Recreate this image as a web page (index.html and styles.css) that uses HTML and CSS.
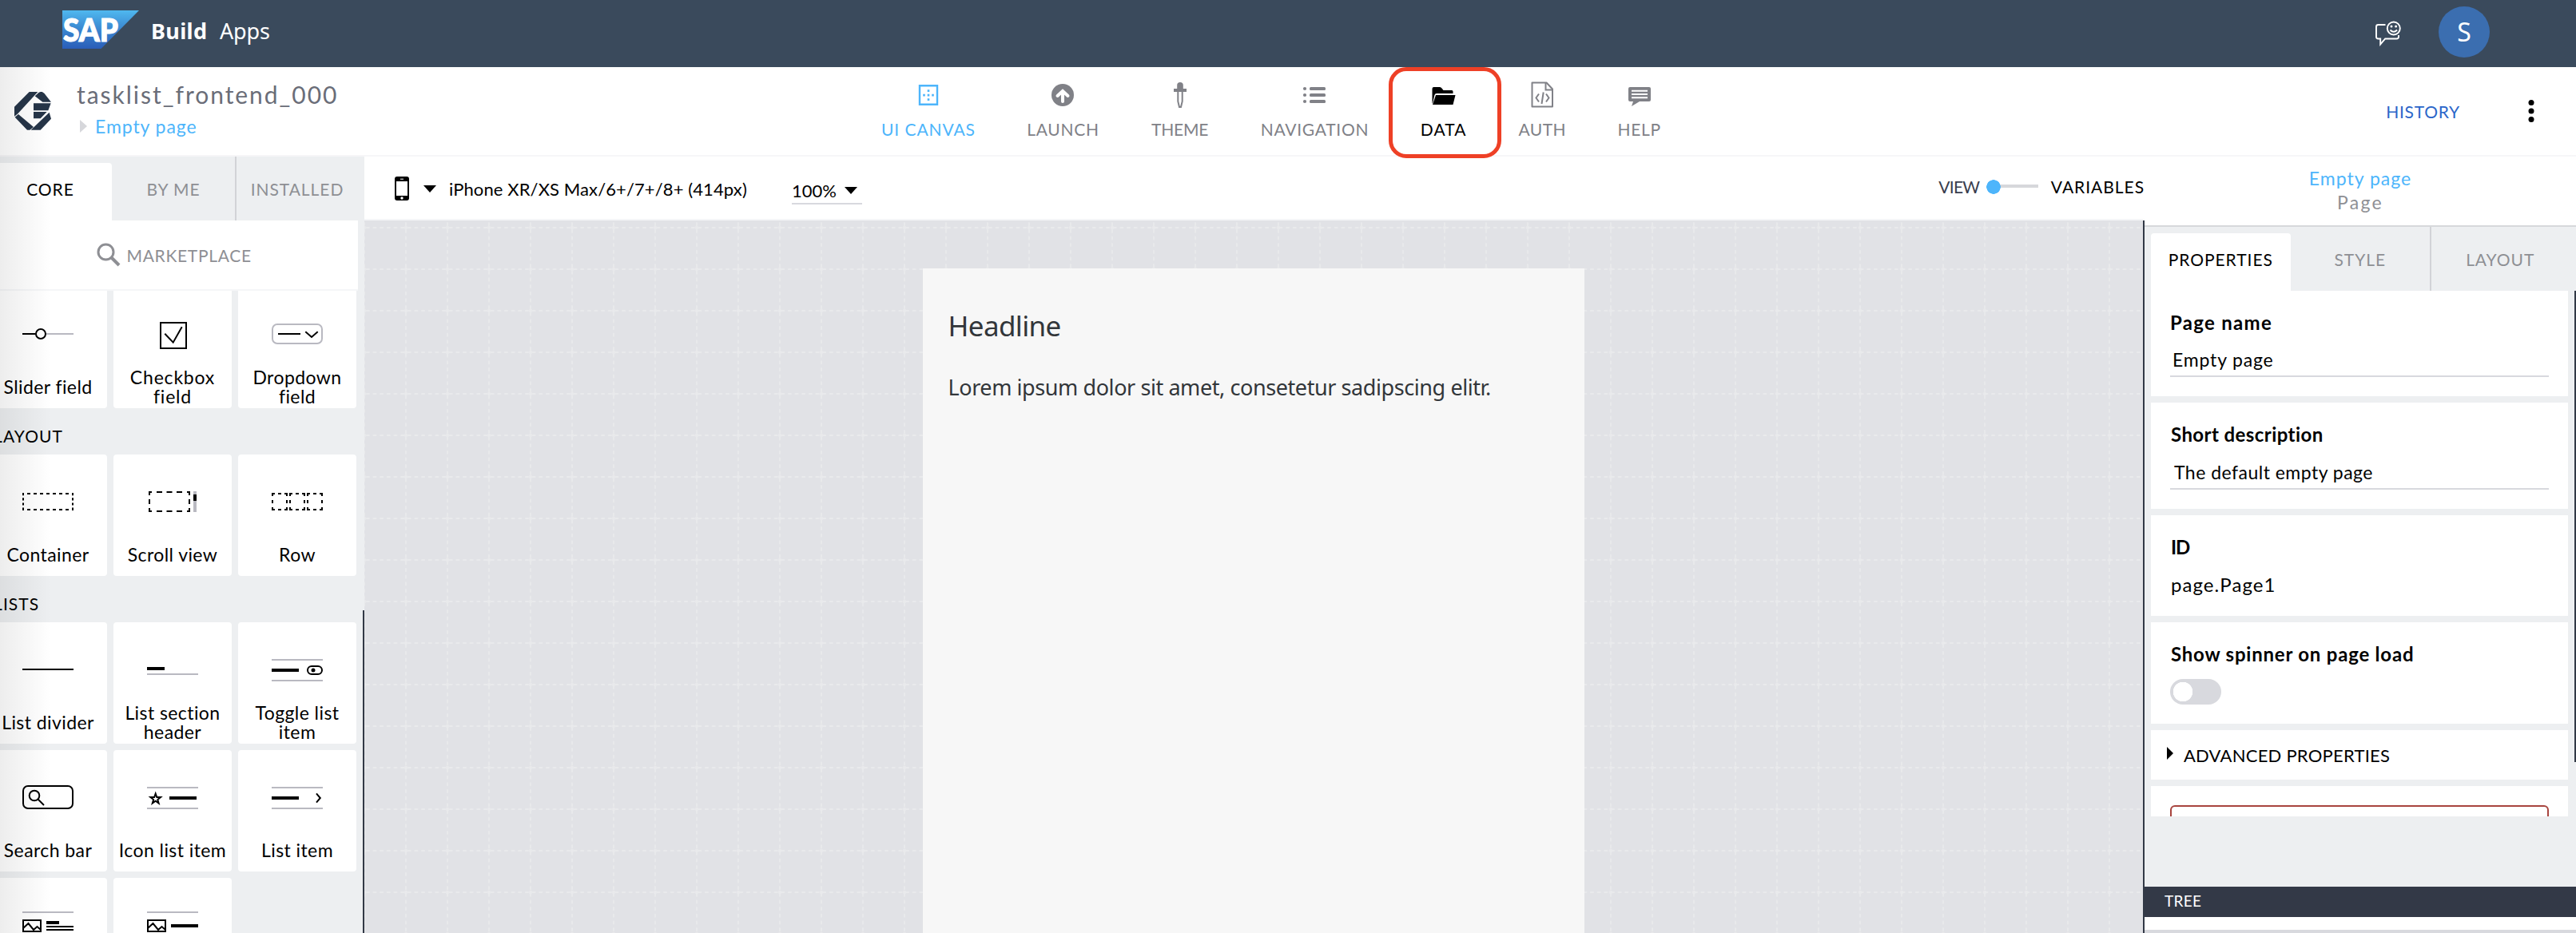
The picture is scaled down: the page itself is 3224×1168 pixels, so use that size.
FILE: index.html
```html
<!DOCTYPE html>
<html lang="en">
<head>
<meta charset="utf-8">
<title>SAP Build Apps</title>
<link rel="stylesheet" href="styles.css">
</head>
<body>
<div class="app">
  <header class="shell">
    <svg class="sap-logo" viewBox="0 0 96 48">
      <defs><linearGradient id="sap" x1="0" y1="0" x2="0" y2="1"><stop offset="0" stop-color="#4fb8ef"/><stop offset=".5" stop-color="#3a86d0"/><stop offset="1" stop-color="#2a5db8"/></linearGradient></defs>
      <path d="M0 0H96L48.500 48H0Z" fill="url(#sap)"/>
      <text class="sap-text" x="1" y="38.500" textLength="69" lengthAdjust="spacingAndGlyphs">SAP</text>
    </svg>
    <span class="product">Build</span>
    <span class="product-sub">Apps</span>
    <svg class="feedback" viewBox="0 0 34 32">
      <g fill="none" stroke="#fff" stroke-width="1.9">
        <path d="M13.500 5H4.500Q2 5 2 7.500V20Q2 22.500 4.500 22.500H7.200V29.500L13.200 22.500H27.500Q30 22.500 30 20V18"/>
        <circle cx="23.800" cy="9.500" r="8"/>
        <path d="M19.500 11.500Q23.800 16 28.100 11.500"/>
      </g>
      <circle cx="21" cy="7" r="1.500" fill="#fff"/><circle cx="26.600" cy="7" r="1.500" fill="#fff"/>
    </svg>
    <span class="avatar">S</span>
  </header>

  <div class="topbar">
    <div class="project">
      <svg class="composer" viewBox="0 0 138 144" fill="#263548">
        <path d="M56 0H88L13 82 0 92V56ZM92 2 98 0H104L112 5 138 38H106L77 16ZM72 43H137L127 70H72ZM72 75H122L98 100H72ZM131 77 138 101 98 143H62ZM2 95 15 84 72 132 58 143H48Z"/>
      </svg>
      <div class="titles">
        <div class="title">tasklist_frontend_000</div>
        <div class="crumb"><i class="crumb-arrow"></i><span>Empty page</span></div>
      </div>
    </div>
    <nav class="nav">
      <a class="nav-item is-active">
        <svg viewBox="0 0 32 34"><path d="M5 5.200H27V28.800H5Z" fill="none" stroke="#4db5fb" stroke-width="2.400"/><path d="M9.200 15.800h2.600v2.600H9.200zM14.700 15.800h2.600v2.600h-2.600zM20.200 15.800h2.600v2.600h-2.600zM14.700 10.300h2.600v2.600h-2.600zM14.700 21.300h2.600v2.600h-2.600z" fill="#4db5fb"/></svg>
        <span>UI CANVAS</span>
      </a>
      <a class="nav-item">
        <svg viewBox="0 0 32 34"><circle cx="16" cy="17" r="14" fill="#808187"/><path d="M16 25V12.500M9.500 18 16 12 22.500 18" fill="none" stroke="#fff" stroke-width="4" stroke-linecap="round"/></svg>
        <span>LAUNCH</span>
      </a>
      <a class="nav-item is-theme">
        <svg viewBox="0 0 32 34"><path d="M12.200 9V4.500Q12.200 1 16 1Q19.800 1 19.800 4.500V9H24V13H8V9Z" fill="#808187"/><path d="M13.300 12V25L15 32H17L18.700 25V12" fill="none" stroke="#808187" stroke-width="2"/></svg>
        <span>THEME</span>
      </a>
      <a class="nav-item">
        <svg viewBox="0 0 32 34"><g fill="#808187"><circle cx="4" cy="9" r="2.100"/><circle cx="4" cy="17" r="2.100"/><circle cx="4" cy="25" r="2.100"/><rect x="10" y="7" width="20" height="4" rx="1.500"/><rect x="10" y="15" width="20" height="4" rx="1.500"/><rect x="10" y="23" width="20" height="4" rx="1.500"/></g></svg>
        <span>NAVIGATION</span>
      </a>
      <a class="nav-item is-data">
        <svg viewBox="0 0 32 34"><path d="M1.500 27V9Q1.500 7 3.500 7H11Q12.500 7 13.500 8.500L15.500 11H26Q27.500 11 27.500 12.500V15H7Q5 15 4.400 17L2 27.500ZM6 17H30.500L27.500 29H2Z" fill="#000"/></svg>
        <span>DATA</span>
        <i class="highlight"></i>
      </a>
      <a class="nav-item is-auth">
        <svg viewBox="0 0 32 34"><g fill="none" stroke="#808187" stroke-width="2"><path d="M3.500 1.500H21.500L29 9.500V31.500H3.500V1.500Z" stroke-linejoin="round"/><path d="M20.500 2V10.500H29"/><path d="M12 15.500 8.500 20.500 12 25.500M21 15.500 24.500 20.500 21 25.500M17.700 13.500 15.500 28"/></g></svg>
        <span>AUTH</span>
      </a>
      <a class="nav-item">
        <svg viewBox="0 0 32 34"><path d="M4 7H28Q30 7 30 9V23Q30 25 28 25H16L6 31 8 25H4Q2 25 2 23V9Q2 7 4 7Z" fill="#808187"/><path d="M6 11.800H26M6 16H26M6 20.200H26" stroke="#fff" stroke-width="2"/></svg>
        <span>HELP</span>
      </a>
    </nav>
    <div class="top-actions">
      <span class="history">HISTORY</span>
      <svg class="kebab" viewBox="0 0 8 30"><circle cx="4" cy="4.500" r="3.500"/><circle cx="4" cy="15" r="3.500"/><circle cx="4" cy="25.500" r="3.500"/></svg>
    </div>
  </div>

  <main class="work">
    <aside class="left">
      <div class="tabs left-tabs">
        <span class="tab on">CORE</span><span class="tab">BY ME</span><span class="tab sep">INSTALLED</span>
      </div>
      <div class="market">
        <svg viewBox="0 0 30 30"><circle cx="11.500" cy="11.500" r="9.500" fill="none" stroke="#8e8f94" stroke-width="3"/><path d="M18.500 18.500 28 28" stroke="#8e8f94" stroke-width="4"/></svg>
        <span>MARKETPLACE</span>
      </div>
      <div class="library">
        <div class="cards first">
          <div class="card"><svg viewBox="0 0 64 40"><path d="M0 20H16.500" stroke="#000" stroke-width="2"/><path d="M30 20H64" stroke="#b9b9c1" stroke-width="2"/><circle cx="23" cy="20" r="6" fill="none" stroke="#000" stroke-width="2"/></svg><p><span>Slider field</span></p></div>
          <div class="card"><svg viewBox="0 0 64 40"><path d="M17 6H49V38H17Z M22.300 19.700 32.700 30.700 43.700 11.300" fill="none" stroke="#000" stroke-width="2"/></svg><p class="wider"><span>Checkbox</span><span>field</span></p></div>
          <div class="card"><svg viewBox="0 0 64 40"><rect x="1" y="8" width="62" height="24" rx="6" fill="none" stroke="#b9b9c1" stroke-width="2"/><path d="M8 20H36M42.300 17.300 50 24 57.700 17.300" fill="none" stroke="#000" stroke-width="2"/></svg><p><span>Dropdown</span><span>field</span></p></div>
        </div>
        <h3>LAYOUT</h3>
        <div class="cards">
          <div class="card"><svg viewBox="0 0 64 40"><path d="M0 10H64M0 30H64" stroke="#000" stroke-width="2" stroke-dasharray="4 4" stroke-dashoffset="2"/><path d="M1 9V31M63 9V31" stroke="#000" stroke-width="2" stroke-dasharray="3.200 3"/></svg><p><span>Container</span></p></div>
          <div class="card"><svg viewBox="0 0 64 40"><path d="M3 12V8H6M12 8h7M24.500 8h7M37 8h7M50 8h3V12M53 17v6M53 28V32H50M44 32h-7M31.500 32h-7M19 32h-7M6 32H3V28M3 23v-6" fill="none" stroke="#000" stroke-width="2"/><path d="M60 7V33" stroke="#b9b9c1" stroke-width="4"/><path d="M60 11V19" stroke="#000" stroke-width="4"/></svg><p><span>Scroll view</span></p></div>
          <div class="card"><svg viewBox="0 0 64 40"><g fill="none" stroke="#000" stroke-width="2"><path id="cell" d="M1 13V10H4M8 10h4M16 10h3V13M19 18v4M19 27v3H16M12 30H8M4 30H1V27M1 22v-4"/><use href="#cell" x="22"/><use href="#cell" x="44"/></g></svg><p><span>Row</span></p></div>
        </div>
        <h3>LISTS</h3>
        <div class="cards">
          <div class="card"><svg viewBox="0 0 64 40"><path d="M0 20H64" stroke="#000" stroke-width="2"/></svg><p><span>List divider</span></p></div>
          <div class="card"><svg viewBox="0 0 64 40"><path d="M0 19H22" stroke="#000" stroke-width="4"/><path d="M0 26H64" stroke="#b9b9c1" stroke-width="2"/></svg><p><span>List section</span><span>header</span></p></div>
          <div class="card"><svg viewBox="0 0 64 40"><path d="M0 8H64M0 34H64" stroke="#b9b9c1" stroke-width="2"/><path d="M0 21H34" stroke="#000" stroke-width="4"/><rect x="45" y="16" width="18" height="10" rx="5" fill="none" stroke="#000" stroke-width="2"/><circle cx="52" cy="21" r="2.500"/></svg><p><span>Toggle list</span><span>item</span></p></div>
          <div class="card"><svg viewBox="0 0 64 40"><rect x="1" y="6" width="62" height="28" rx="6" fill="none" stroke="#000" stroke-width="2"/><circle cx="15" cy="18" r="6.300" fill="none" stroke="#000" stroke-width="2"/><path d="M19.500 22.500 27 30" stroke="#000" stroke-width="2"/></svg><p><span>Search bar</span></p></div>
          <div class="card"><svg viewBox="0 0 64 40"><path d="M0 8H64M0 34H64" stroke="#b9b9c1" stroke-width="2"/><path d="M28 21H62" stroke="#000" stroke-width="4"/><path d="M10.700 15.500 12.300 20H17L13.300 23 14.600 27.500 10.700 24.800 6.800 27.500 8.100 23 4.400 20H9.100Z" fill="none" stroke="#000" stroke-width="2"/></svg><p><span>Icon list item</span></p></div>
          <div class="card"><svg viewBox="0 0 64 40"><path d="M0 8H64M0 34H64" stroke="#b9b9c1" stroke-width="2"/><path d="M0 21H34" stroke="#000" stroke-width="4"/><path d="M56 15.300 60.800 21 56 26.700" fill="none" stroke="#000" stroke-width="2"/></svg><p><span>List item</span></p></div>
          <div class="card"><svg viewBox="0 0 64 40"><path d="M0 4H64" stroke="#b9b9c1" stroke-width="2"/><path d="M1 14H23V28H1ZM1 24 7.500 18 14 26 18.500 22 23 26" fill="none" stroke="#000" stroke-width="2"/><path d="M30 17H46" stroke="#000" stroke-width="4"/><path d="M30 22H64M30 26H64" stroke="#000" stroke-width="2"/></svg></div>
          <div class="card"><svg viewBox="0 0 64 40"><path d="M0 4H64" stroke="#b9b9c1" stroke-width="2"/><path d="M1 14H23V28H1ZM1 24 7.500 18 14 26 18.500 22 23 26" fill="none" stroke="#000" stroke-width="2"/><path d="M30 21H64" stroke="#000" stroke-width="4"/></svg></div>
        </div>
        <i class="left-scroll"></i>
      </div>
    </aside>

    <section class="center">
      <div class="toolbar">
        <svg class="phone" viewBox="0 0 18 30"><rect width="18" height="30" rx="3"/><path d="M2 6H16V24H2Z" fill="#fff"/><path d="M7 3.200H11" stroke="#fff"/><circle cx="9" cy="27" r="1.700" fill="#fff"/></svg>
        <svg class="caret" viewBox="0 0 16 9"><path d="M0 0H16L8 9Z"/></svg>
        <span class="device">iPhone XR/XS Max/6+/7+/8+ (414px)</span>
        <div class="zoom"><span>100%</span><svg class="caret" viewBox="0 0 16 9"><path d="M0 0H16L8 9Z"/></svg></div>
        <div class="mode"><span class="view">VIEW</span><i class="slide"></i><span class="vars">VARIABLES</span></div>
      </div>
      <div class="canvas">
        <div class="page">
          <h1>Headline</h1>
          <p>Lorem ipsum dolor sit amet, consetetur sadipscing elitr.</p>
        </div>
      </div>
    </section>

    <aside class="right">
      <div class="subject"><span class="subject-name">Empty page</span><span class="subject-type">Page</span></div>
      <div class="tabs right-tabs">
        <span class="tab on">PROPERTIES</span><span class="tab">STYLE</span><span class="tab sep">LAYOUT</span>
      </div>
      <div class="props">
        <div class="prop p1"><h4>Page name</h4><div class="field">Empty page</div></div>
        <div class="prop p2"><h4>Short description</h4><div class="field">The default empty page</div></div>
        <div class="prop p3"><h4>ID</h4><div class="plain">page.Page1</div></div>
        <div class="prop p4"><h4>Show spinner on page load</h4><i class="switch"></i></div>
        <div class="prop p5"><i class="adv-arrow"></i><span>ADVANCED PROPERTIES</span></div>
        <div class="prop p6"><div class="danger"></div></div>
        <i class="right-scroll"></i>
      </div>
      <div class="tree">TREE</div>
      <div class="tree-body"></div>
    </aside>
  </main>
  <div class="edge"></div>
</div>
</body>
</html>
```
FILE: styles.css
```css
* { box-sizing: border-box; }
body { margin: 0; background: #fff; font-family: Lato, "Liberation Sans", sans-serif; font-size: 22px; color: #000; }
svg { display: block; flex: none; }
h1, h3, h4, p { margin: 0; font-weight: 400; }
i { display: block; flex: none; }

.app { position: relative; width: 3224px; height: 1168px; display: grid; grid-template-rows: 84px 112px 972px; overflow: hidden; }

/* shell bar */
.shell { background: #3a4a5c; color: #fff; display: flex; align-items: center; padding: 0 108px 0 78px; font-family: "Noto Sans", sans-serif; font-size: 27px; line-height: 40px; }
.sap-logo { width: 96px; height: 48px; margin-top: -10px; }
.sap-text { font: 900 40px Lato, sans-serif; fill: #fff; stroke: #fff; stroke-width: 1.2px; }
.product { font-weight: 700; margin: 0 0 6px 15px; letter-spacing: .34px; }
.product-sub { margin: 0 0 6px 15.5px; letter-spacing: -.15px; flex: 1; }
.feedback { width: 34px; height: 32px; margin-right: 46px; }
.avatar { width: 64px; height: 64px; border-radius: 50%; background: #3b6eb0; font-size: 32px; line-height: 64px; text-align: center; margin-top: -4px; }

/* project bar */
.topbar { background: #fff; border-bottom: 2px solid #f6f6f8; display: grid; grid-template-columns: 1103.7px auto 1fr; }
.project { display: flex; padding-left: 18px; }
.composer { width: 46px; height: 48px; margin-top: 31px; }
.titles { margin-left: 32px; padding-top: 14px; }
.title { font-size: 30px; line-height: 40px; letter-spacing: 1.97px; color: #6a6d78; }
.crumb { display: flex; align-items: center; color: #4db5fb; font-size: 23px; letter-spacing: .92px; line-height: 40px; }
.crumb-arrow { border: solid transparent; border-width: 8px 0 8px 9px; border-left-color: #d6d7db; margin: 0 10px 0 4px; }
.nav { display: grid; grid-template-columns: 116.5px 88.5px 72px 133.5px 57px 58px 53px; gap: 66px; color: #808187; letter-spacing: .73px; }
.nav-item { position: relative; display: flex; flex-direction: column; align-items: center; padding-top: 18px; line-height: 30px; font-size: 21px; white-space: nowrap; }
.nav-item svg { width: 32px; height: 34px; margin-bottom: 11px; }
.is-active { color: #4db5fb; letter-spacing: .92px; }
.is-theme { letter-spacing: -.19px; }
.is-data { color: #000; letter-spacing: 1.09px; }
.is-auth { letter-spacing: .43px; }
.highlight { position: absolute; left: 50%; top: 0; width: 141px; height: 114px; margin-left: -69px; border: 5px solid #ee4026; border-radius: 22px; }
.top-actions { display: flex; justify-content: flex-end; align-items: center; padding-right: 52px; }
.history { color: #2b66c9; margin-right: 85px; font-size: 21px; letter-spacing: .76px; }
.kebab { width: 8px; height: 30px; }

.work { display: grid; grid-template-columns: 456px 2228px 540px; min-height: 0; }

/* tabs */
.tabs { display: flex; padding-top: 8px; background: #edeff1; color: #8e8f94; font-size: 21px; letter-spacing: .95px; }
.tab { flex: none; height: 72px; line-height: 66px; text-align: center; }
.tab.on { background: #fff; color: #000; border-radius: 4px 4px 0 0; }
.tab.sep { border-left: 2px solid #d2d3d7; margin-top: -8px; padding-top: 8px; height: 80px; }

/* component library */
.left { background: #edeff1; display: flex; flex-direction: column; overflow: hidden; min-height: 0; }
.left-tabs { margin-left: -14px; }
.left-tabs .tab { width: 154px; }
.market { width: 448px; height: 88px; background: #fff; border-bottom: 2px solid #f5f6f8; color: #8e8f94; display: flex; align-items: center; padding-left: 121px; flex: none; font-size: 21px; letter-spacing: .69px; }
.market svg { width: 30px; height: 30px; margin-right: 7.5px; }
.library { position: relative; flex: 1; min-height: 0; overflow: hidden; }
.cards { display: grid; grid-template-columns: repeat(3, 148px); grid-auto-rows: 152px; gap: 8px; margin-left: -14px; }
.first { margin-top: -5px; }
.card { background: #fff; border-radius: 4px; display: flex; flex-direction: column; align-items: center; padding-top: 39px; }
.card svg { width: 64px; height: 40px; overflow: visible; }
.card p { height: 48px; margin-top: 22px; display: flex; flex-direction: column; justify-content: center; line-height: 24px; text-align: center; font-size: 23px; letter-spacing: .42px; white-space: nowrap; }
.card .wider { letter-spacing: .8px; }
.library h3 { height: 58px; line-height: 70px; margin-left: -8px; font-size: 21px; letter-spacing: 1.1px; }
.left-scroll { position: absolute; right: 0; top: 400px; width: 2px; bottom: 0; background: #323946; }

/* canvas */
.center { display: flex; flex-direction: column; min-height: 0; }
.toolbar { height: 80px; background: #fff; border-bottom: 2px solid #f5f6f8; display: flex; align-items: center; padding-left: 38px; flex: none; }
.phone { width: 18px; height: 30px; margin-top: 2px; }
.caret { width: 16px; height: 9px; }
.phone + .caret { margin: 3px 16px 0 18px; }
.device { letter-spacing: .11px; margin-top: 3px; }
.zoom { display: flex; align-items: center; margin: 2px 0 0 56px; width: 88px; height: 40px; padding-top: 6px; border-bottom: 2px solid #d8d9de; }
.zoom .caret { margin-left: 10px; }
.mode { display: flex; align-items: center; margin: -3px 0 0 auto; font-size: 21px; }
.view { color: #383d4d; letter-spacing: -.74px; }
.vars { letter-spacing: .97px; }
.slide { width: 65px; height: 18px; margin: 0 16px 0 8.5px; background: radial-gradient(circle at 9px 9px, #4db5fb 8.5px, transparent 9px), linear-gradient(#d6d7db, #d6d7db) 12px 6px / 53px 4px no-repeat; }
/* dashed 52px grid with a soft cross at every intersection */
.canvas { flex: 1; border-right: 2px solid #323946; min-height: 0; background:
    radial-gradient(circle 3px at 26px 9px, #e9eaec 40%, transparent) 26px 0 / 52px 52px,
    radial-gradient(ellipse 3px 1.3px at 4.33px 9px, #e9eaec 70%, transparent) 0 0 / 8.667px 52px,
    radial-gradient(ellipse 1.3px 3px at 26px 4.33px, #e8e9eb 70%, transparent) 26px 9px / 52px 8.667px,
    #e1e2e6; }
.page { width: 828px; height: 100%; margin: 60px auto 0; background: #f7f7f7; padding: 44px 32px; color: #32363a; font-family: "Noto Sans", sans-serif; }
.page h1 { font-size: 35px; line-height: 56px; letter-spacing: -.63px; margin-left: -.5px; }
.page p { font-size: 27px; line-height: 40px; letter-spacing: -.42px; margin: 28.5px 0 0 -.5px; white-space: nowrap; }

/* property panel */
.right { background: #edeff1; display: flex; flex-direction: column; min-height: 0; overflow: hidden; }
.subject { height: 88px; flex: none; background: #fff; border-bottom: 2px solid #d6d8db; display: flex; flex-direction: column; align-items: center; line-height: 30px; padding-top: 12px; font-size: 23px; letter-spacing: 1px; }
.subject-name { color: #4db5fb; }
.subject-type { color: #8e8f94; letter-spacing: 2.3px; }
.right-tabs { padding-left: 8px; }
.right-tabs .tab { width: 174.5px; }
.props { position: relative; display: flex; flex-direction: column; gap: 8px; padding: 0 10px 0 8px; height: 658px; overflow: hidden; flex: none; }
.prop { background: #fff; padding: 22px 24px 0 25px; flex: none; }
.prop h4 { font-size: 24px; line-height: 36px; font-weight: 700; letter-spacing: .78px; }
.p1 { height: 132px; } .p2 { height: 133px; } .p3 { height: 126px; } .p4 { height: 127px; }
.p1 h4 { letter-spacing: 1.3px; margin-left: -1px; }
.p2 h4 { letter-spacing: .42px; }
.p3 h4 { letter-spacing: -1px; }
.prop.p5 { height: 62px; display: flex; align-items: center; padding: 0 20px; letter-spacing: .23px; }
.prop.p6 { height: 80px; padding: 24px 24px 0; }
.field { border-bottom: 2px solid #d8d9de; height: 38px; line-height: 28px; padding: 2px 4px 0 3px; margin: 12px 0 0 -1px; font-size: 23px; letter-spacing: .82px; }
.p2 .field { margin-top: 13px; padding-left: 5px; letter-spacing: .48px; }
.plain { font-size: 24px; line-height: 36px; margin-top: 11px; letter-spacing: 1.06px; }
.switch { width: 64px; height: 32px; border-radius: 16px; margin: 13px 0 0 -1px; background: radial-gradient(circle at 16px 16px, #fff 12px, transparent 12.5px) #d8d9de; }
.adv-arrow { border: solid transparent; border-width: 8px 0 8px 8px; border-left-color: #000; margin: -4px 13px 0 0; }
.danger { height: 60px; border: 2px solid #a8443e; border-radius: 6px; }
.right-scroll { position: absolute; right: 0; top: 0; width: 2px; height: 590px; background: #323946; }
.tree { margin-top: 88px; height: 38px; line-height: 36px; padding-left: 25px; background: #333947; color: #fff; font-size: 19px; letter-spacing: .3px; flex: none; }
.tree-body { flex: 1; background: #fff; border-bottom: 4px solid #d8d9de; }

/* soft shade along the window's left edge */
.edge { position: absolute; left: 0; top: 84px; bottom: 0; width: 64px; background: linear-gradient(90deg, rgba(0,0,0,.07), rgba(0,0,0,0)); pointer-events: none; }
```
